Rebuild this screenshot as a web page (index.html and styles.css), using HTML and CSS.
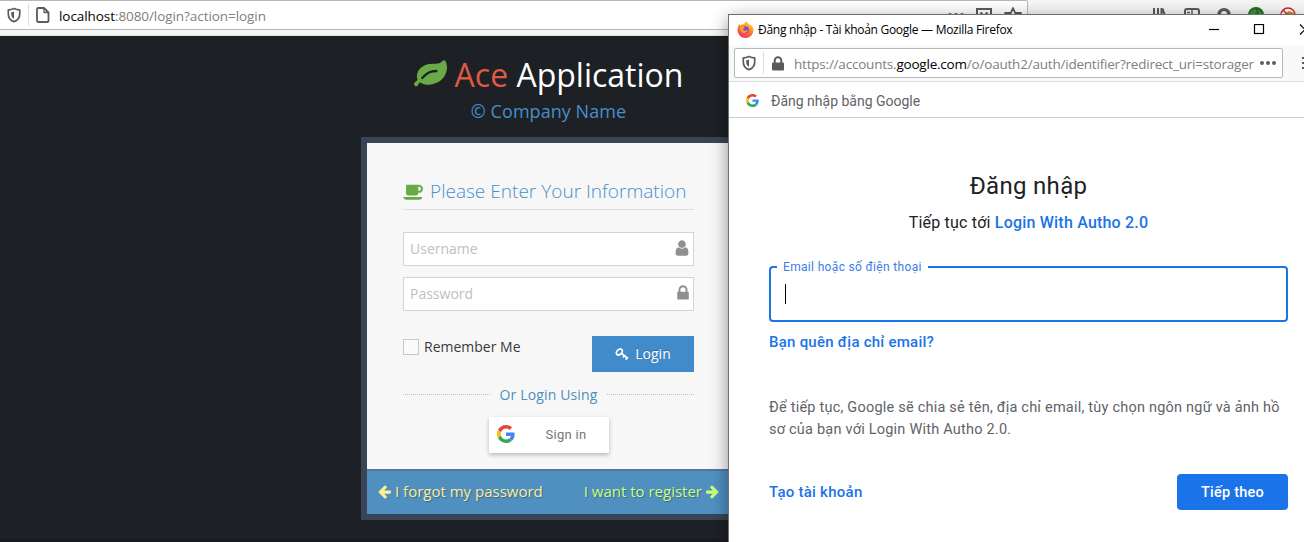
FILE: index.html
```html
<!DOCTYPE html>
<html lang="vi">
<head>
<meta charset="utf-8">
<title>Ace Application</title>
<link rel="stylesheet" href="styles.css">
</head>
<body>
<svg class="defs" width="0" height="0">
  <symbol id="shield" viewBox="0 0 16 16"><path d="M8 1.600C6.300 2.500 4 2.900 2.300 2.900V7c0 3.700 2.200 6.500 5.700 7.600 3.500-1.100 5.700-3.900 5.700-7.600V2.900C12 2.900 9.700 2.500 8 1.600z" fill="none" stroke="#5b5b5b" stroke-width="1.700" stroke-linejoin="round"/><path d="M8 4.600v7.200C6 10.800 5.200 9 5.200 7V5.200C6.200 5.200 7.200 5 8 4.600z" fill="#5b5b5b"/></symbol>
  <symbol id="google" viewBox="0 0 48 48"><path fill="#EA4335" d="M24 9.500c3.540 0 6.710 1.220 9.210 3.600l6.850-6.850C35.900 2.380 30.470 0 24 0 14.620 0 6.510 5.380 2.560 13.220l7.980 6.190C12.430 13.720 17.740 9.500 24 9.500z"/><path fill="#4285F4" d="M46.980 24.550c0-1.570-.15-3.090-.38-4.550H24v9.020h12.940c-.58 2.960-2.260 5.480-4.780 7.180l7.730 6c4.510-4.180 7.090-10.360 7.090-17.650z"/><path fill="#FBBC05" d="M10.530 28.590c-.48-1.450-.76-2.990-.76-4.590s.27-3.140.76-4.590l-7.980-6.190C.92 16.460 0 20.120 0 24c0 3.880.92 7.540 2.560 10.780l7.970-6.190z"/><path fill="#34A853" d="M24 48c6.480 0 11.930-2.130 15.890-5.810l-7.730-6c-2.150 1.450-4.920 2.300-8.160 2.300-6.260 0-11.570-4.220-13.470-9.910l-7.980 6.190C6.510 42.620 14.620 48 24 48z"/></symbol>
  <symbol id="arrow" viewBox="0 0 1792 1792"><path d="M1664 896v128q0 53-32.500 90.500t-84.500 37.500h-704l293 294q38 36 38 90t-38 90l-75 76q-37 37-90 37-52 0-91-37l-651-652q-37-37-37-90 0-52 37-91l651-650q38-38 91-38 52 0 90 38l75 74q38 38 38 91t-38 91l-293 293h704q52 0 84.500 37.500t32.500 90.500z" fill="currentColor"/></symbol>
</svg>
<div class="desktop">
  <header class="toolbar">
    <div class="address">
      <svg class="shield" width="16" height="16"><use href="#shield"/></svg>
      <i class="divider"></i>
      <svg class="doc" width="16" height="16" viewBox="0 0 16 16" fill="none" stroke="#5b5b5b" stroke-width="1.800" stroke-linejoin="round"><path d="M3.300 1h5.700L13.500 5.500v8.200A1.300 1.300 0 0 1 12.200 15H3.300a1.300 1.300 0 0 1-1.300-1.300V2.300A1.300 1.300 0 0 1 3.300 1z"/><path d="M9 1v4.500h4.500" stroke-width="1.300"/></svg>
      <span class="url"><b>localhost</b>:8080/login?action=login</span>
      <span class="actions">
        <svg width="16" height="16" viewBox="0 0 16 16" fill="#5b5b5b"><circle cx="2" cy="8" r="2"/><circle cx="8" cy="8" r="2"/><circle cx="14" cy="8" r="2"/></svg>
        <svg width="16" height="16" viewBox="0 0 16 16" fill="none" stroke="#5b5b5b" stroke-width="2"><path d="M1 2h14v6a7 7 0 0 1-14 0zM4.500 5.500L8 9l3.500-3.500"/></svg>
        <svg width="18" height="16" viewBox="0 0 18 16" fill="none" stroke="#5b5b5b" stroke-width="1.800" stroke-linejoin="round"><path d="M9 1l2.200 5H17l-4.500 3.500 1.700 5.500L9 12l-5.200 3 1.700-5.500L1 6h5.800z"/></svg>
      </span>
    </div>
    <div class="tools">
      <svg width="16" height="16" viewBox="0 0 16 16" stroke="#5b5b5b" stroke-width="2"><path d="M2 1v14M6 1v14M9.500 1v14M10.500 1.500L15 15"/></svg>
      <svg width="16" height="16" viewBox="0 0 16 16" fill="none" stroke="#5b5b5b" stroke-width="2"><rect x="1" y="2" width="14" height="12" rx="2"/><path d="M8 2v12M3 5.500h3M3 8.500h3" stroke-width="1.400"/></svg>
      <svg width="16" height="16" viewBox="0 0 16 16"><circle cx="8" cy="8" r="7" fill="#5b5b5b"/><circle cx="8" cy="7" r="3" fill="#f6f6f6"/></svg>
      <svg width="16" height="16" viewBox="0 0 16 16"><circle cx="8" cy="8" r="8" fill="#236b23"/><path d="M3 4l4-2 2 3-3 3-4-1zM10 2l4 4-3 2z" fill="#3b963b"/></svg>
      <svg width="16" height="16" viewBox="0 0 16 16"><circle cx="8" cy="8" r="7" fill="#fff" stroke="#d32a2a" stroke-width="1.500"/><path d="M5 7l4-3 5 2-3 6z" fill="#d98226"/><path d="M3 3l10 10" stroke="#d32a2a" stroke-width="1.500"/></svg>
    </div>
  </header>

  <main class="page">
    <section class="login">
      <h1 class="brand">
        <svg width="33" height="33" viewBox="0 0 1792 1792"><path fill="#69aa46" d="M1280 704q0-26-19-45t-45-19q-172 0-318 49.500t-259.500 134-235.500 219.500q-19 21-19 45 0 26 19 45t45 19q24 0 45-19 27-24 74-71t67-66q137-124 268.500-176t313.500-52q26 0 45-19t19-45zm512-198q0 95-20 193-46 224-184.500 383t-357.500 268q-214 108-438 108-148 0-286-47-15-5-88-42t-96-37q-16 0-39.500 32t-45 70-52.500 70-60 32q-43 0-63.500-17.500t-45.500-59.500q-2-4-6-11t-5.500-10-3-9.500-1.500-13.500q0-35 31-73.500t68-65.500 68-56 31-48q0-4-14-38t-16-44q-9-51-9-104 0-115 43.500-220t119-184.500 170.500-139 204-95.500q55-18 145-25.500t179.500-9 178.500-6 163.500-24 113.500-56.500l29.500-29.500 29.500-28 27-20 36.500-16 43.500-4.500q39 0 70.500 46t47.500 112 24 124 8 96z"/></svg>
        <span><em>Ace</em> Application</span>
      </h1>
      <p class="company">© Company Name</p>
      <div class="box">
        <form class="form">
          <h2 class="heading">
            <svg width="21" height="19" viewBox="0 0 1920 1792"><path fill="#69aa46" d="M1664 640q0-80-56-136t-136-56h-64v384h64q80 0 136-56t56-136zm-1664 768h1792q0 106-75 181t-181 75h-1280q-106 0-181-75t-75-181zm1856-768q0 159-112.500 271.500t-271.500 112.500h-64v32q0 92-66 158t-158 66h-704q-92 0-158-66t-66-158v-736q0-26 19-45t45-19h1152q159 0 271.500 112.500t112.500 271.500z"/></svg>
            <span>Please Enter Your Information</span>
          </h2>
          <label class="field">
            <span>Username</span>
            <svg width="18" height="18" viewBox="0 0 1792 1792"><path fill="#909090" d="M1536 1399q0 109-62.500 187t-150.500 78h-854q-88 0-150.500-78t-62.500-187q0-85 8.500-160.500t31.500-152 58.500-131 94-89 134.500-34.500q131 128 313 128t313-128q76 0 134.500 34.500t94 89 58.500 131 31.500 152 8.500 160.500zm-256-887q0 159-112.500 271.500t-271.500 112.500-271.500-112.500-112.500-271.500 112.500-271.500 271.500-112.500 271.500 112.500 112.500 271.500z"/></svg>
          </label>
          <label class="field password">
            <span>Password</span>
            <svg width="18" height="18" viewBox="0 0 1792 1792"><path fill="#909090" d="M640 768h512v-192q0-106-75-181t-181-75-181 75-75 181v192zm832 96v576q0 40-28 68t-68 28h-960q-40 0-68-28t-28-68v-576q0-40 28-68t68-28h32v-192q0-184 132-316t316-132 316 132 132 316v192h32q40 0 68 28t28 68z"/></svg>
          </label>
          <div class="submit">
            <span class="remember"><i></i><span>Remember Me</span></span>
            <span class="login-btn">
              <svg width="14" height="14" viewBox="0 0 14 14" fill="none" stroke="#fff" stroke-width="1.700"><ellipse cx="4.300" cy="5" rx="3.400" ry="2.400" transform="rotate(-45 4.300 5)"/><path d="M6 6l7 5.500M9.500 8.600L8 10.500M12.300 10.600L10.700 12.700"/></svg>
              <span>Login</span>
            </span>
          </div>
          <div class="or"><i></i><span>Or Login Using</span><i></i></div>
          <div class="google-btn"><svg width="18" height="18"><use href="#google"/></svg><span>Sign in</span></div>
        </form>
        <footer class="links">
          <a class="forgot"><svg width="15" height="15"><use href="#arrow"/></svg><span>I forgot my password</span></a>
          <a class="register"><span>I want to register</span><svg width="15" height="15"><use href="#arrow"/></svg></a>
        </footer>
      </div>
    </section>
  </main>

  <section class="popup">
    <div class="titlebar">
      <svg width="17" height="17" viewBox="0 0 17 17"><defs><linearGradient id="fire" x1=".8" y1="0" x2=".3" y2="1"><stop offset="0" stop-color="#ffe23d"/><stop offset=".45" stop-color="#ff8b22"/><stop offset="1" stop-color="#f52b64"/></linearGradient></defs><path d="M9.500.5c1 1 2 1.400 2.500 3 2-.1 4.500 2.500 4.500 5.500a8 8 0 0 1-16 0c0-2.500.8-4.500 2-6l.8 1.500C4.500 3.700 5.500 3.200 7 3.300 7.300 2 8.200 1 9.500.5z" fill="url(#fire)"/><circle cx="8.300" cy="8.800" r="3.600" fill="#8048d8"/><path d="M3.300 5.500c2-.6 3.500 0 4.700 1.300L6 8c.5 2 3.500 2.200 5 .5-.3 3.500-3.500 4.300-5.700 3C3 10 2.600 7.500 3.300 5.500z" fill="#ff9a26"/></svg>
      <span class="wintitle">Đăng nhập - Tài khoản Google — Mozilla Firefox</span>
      <svg class="controls" width="95" height="12" viewBox="0 0 95 12" fill="none" stroke="#000" stroke-width="1.200"><path d="M0 5.500h10"/><rect x="45.500" y=".5" width="9" height="9"/><path d="M91 .5l10 10M91 10.500l10-10"/></svg>
    </div>
    <div class="navbar">
      <div class="location">
        <svg class="shield" width="16" height="16"><use href="#shield"/></svg>
        <i class="divider"></i>
        <svg class="lock" width="14" height="15" viewBox="0 0 14 15"><rect x="1" y="6.500" width="12" height="8" rx="1" fill="#5b5b5b"/><path d="M3.700 7V4.500a3.300 3.300 0 0 1 6.600 0V7" fill="none" stroke="#5b5b5b" stroke-width="2"/></svg>
        <span class="url">https://accounts.<b>google.com</b>/o/oauth2/auth/identifier?redirect_uri=storager</span>
        <svg class="dots" width="16" height="6" viewBox="0 0 16 6" fill="#5b5b5b"><circle cx="2" cy="3" r="2"/><circle cx="8" cy="3" r="2"/><circle cx="14" cy="3" r="2"/></svg>
      </div>
      <svg width="2" height="14" viewBox="0 0 2 14" fill="#5b5b5b"><path d="M0 1h2v2H0zM0 6h2v2H0zM0 11h2v2H0z"/></svg>
    </div>
    <div class="provider"><svg width="13" height="13"><use href="#google"/></svg><span>Đăng nhập bằng Google</span></div>
    <div class="signin">
      <h2>Đăng nhập</h2>
      <p class="continue"><span>Tiếp tục tới</span> <b>Login With Autho 2.0</b></p>
      <div class="email"><label>Email hoặc số điện thoại</label><i class="caret"></i></div>
      <a class="forgot-email">Bạn quên địa chỉ email?</a>
      <p class="notice"><span>Để tiếp tục, Google sẽ chia sẻ tên, địa chỉ email, tùy chọn ngôn ngữ và ảnh hồ</span><br><span>sơ của bạn với Login With Autho 2.0.</span></p>
      <div class="next"><a>Tạo tài khoản</a><span class="next-btn">Tiếp theo</span></div>
    </div>
  </section>
</div>
</body>
</html>
```

FILE: styles.css
```css
* { box-sizing: border-box; }
body { margin: 0; font-family: "Open Sans", "Noto Sans", sans-serif; overflow: hidden; }
h1, h2, p { margin: 0; font-weight: 400; }
svg { display: block; flex: none; }
span, a { white-space: nowrap; }
.defs { position: absolute; }
.desktop { position: relative; width: 1304px; height: 542px; overflow: hidden; background: #1d2024; }

.toolbar { display: flex; height: 36px; background: #f6f6f6; border-bottom: 1px solid #e4e4e4; }
.address { display: flex; align-items: center; width: 1028px; height: 30px; padding-left: 6px; background: #fff; border: 1px solid #b8b8b8; border-left: 0; border-radius: 0 2px 2px 0; }
.divider { width: 1px; height: 22px; background: #ddd; margin: 0 6px; }
.url { font: 13.500px/18px "Open Sans", sans-serif; color: #808080; }
.url b { font-weight: 400; color: #000; }
.address .url { margin-left: 8px; letter-spacing: -.07px; padding-top: 2px; }
.actions { display: flex; gap: 12px; margin-left: auto; padding-right: 5px; }
.tools { display: flex; gap: 16px; margin-left: 124px; padding-top: 7px; }

.page { height: 506px; padding-top: 19px; border-bottom: 3px solid #191b1f; }
.login { width: 375px; margin-left: 361px; }
.brand { display: flex; align-items: center; justify-content: center; gap: 8px; height: 40px; color: #fff; font-size: 32px; line-height: 40px; }
.brand em { font-style: normal; color: #dd5a43; }
.brand svg { margin-bottom: 2px; }
.company { height: 42px; color: #478fca; font-size: 18px; line-height: 33px; text-align: center; letter-spacing: .05px; }
.box { height: 383px; border: 6px solid #394557; background: #f7f7f7; }
.form { height: 326px; padding: 33px 36px 0; }
.heading { display: flex; align-items: center; gap: 6px; height: 34px; margin-bottom: 22px; padding-bottom: 3px; border-bottom: 1px solid #d5e3ef; color: #478fca; font-size: 19px; font-weight: 300; letter-spacing: .02px; }
.heading svg { margin-bottom: -1px; }
.field { display: flex; align-items: center; justify-content: space-between; height: 34px; margin-bottom: 11px; padding: 0 2px 1px 6px; border: 1px solid #d5d5d5; background: #fff; color: #c0c0c0; font-size: 14px; }
.field svg { margin-bottom: 1px; }
.field.password { padding-right: 1px; }
.submit { display: flex; justify-content: space-between; height: 36px; margin-top: 25px; }
.remember { display: flex; align-items: center; gap: 5px; height: 22px; color: #393939; font-size: 14px; }
.remember span { padding-bottom: 2px; }
.remember i { width: 16px; height: 16px; border: 1px solid #c8c8c8; background: #fafafa; }
.login-btn { display: flex; align-items: center; justify-content: center; gap: 6px; width: 102px; background: #428bca; color: #fff; font-size: 14px; text-shadow: 0 -1px 0 rgba(0,0,0,.25); }
.login-btn span { padding-bottom: 2px; }
.or { display: flex; align-items: center; gap: 9px; height: 20px; margin-top: 12px; color: #4c8fbd; font-size: 14px; letter-spacing: .15px; }
.or span { padding-top: 1px; }
.or i { flex: 1; border-top: 1px dotted #a6c4db; }
.google-btn { display: flex; align-items: center; width: 120px; height: 36px; margin: 13px auto 0; padding: 0 0 2px 8px; background: #fff; border-radius: 1px; box-shadow: 0 2px 4px rgba(0,0,0,.25); color: #757575; font: 13px Roboto, sans-serif; }
.google-btn span { margin-left: 31px; letter-spacing: .3px; }
.links { display: flex; justify-content: space-between; align-items: center; height: 45px; padding: 0 10px 3px 10px; border-top: 2px solid #597597; background: #5090c1; font-size: 15px; text-shadow: 1px 1px 1px rgba(0,0,0,.3); }
.links a { display: flex; align-items: center; gap: 3px; }
.links .forgot { color: #fe9; }
.links .register { color: #cf7; }
.register svg { transform: scaleX(-1); }

.popup { position: absolute; left: 728px; top: 14px; width: 576px; height: 528px; background: #fff; border: solid #707070; border-width: 1px 0 0 1px; box-shadow: 0 4px 16px rgba(0,0,0,.42); }
.titlebar { display: flex; align-items: center; height: 30px; padding-left: 8px; }
.titlebar svg { margin-bottom: 1px; }
.wintitle { margin: 0 0 1px 4px; font: 12px "Open Sans", sans-serif; color: #000; letter-spacing: -.28px; }
.titlebar .controls { margin-left: auto; margin-bottom: 0; }
.navbar { display: flex; align-items: center; height: 37px; padding: 0 0 0 5px; background: #f9f9f9; border-bottom: 1px solid #ddd; justify-content: space-between; }
.location { display: flex; align-items: center; width: 549px; height: 30px; padding-left: 6px; border: 1px solid #b8b8b8; border-radius: 2px; background: #fff; }
.location .lock { margin-left: 1px; }
.location .url { margin-left: 9px; letter-spacing: -.21px; padding-top: 2px; width: 460px; overflow: hidden; }
.dots { margin-left: 6px; }
.provider { display: flex; align-items: center; gap: 12px; height: 36px; padding: 2px 0 0 17px; border-bottom: 1px solid #ccc; color: #5f6368; font: 14px Roboto, sans-serif; }
.signin { padding: 50px 16px 0 40px; font-family: Roboto, sans-serif; }
.signin h2 { height: 36px; text-align: center; color: #202124; font-size: 24px; line-height: 36px; letter-spacing: .3px; }
.continue { height: 24px; margin-top: 7px; text-align: center; color: #202124; font-size: 16px; line-height: 24px; letter-spacing: .2px; }
.continue b, .forgot-email, .next a { color: #1a73e8; font-weight: 500; }
.email { position: relative; height: 56px; margin-top: 31px; border: 2px solid #1a73e8; border-radius: 4px; padding: 16px 14px; }
.email label { position: absolute; left: 6px; top: -9px; padding: 0 6px; background: #fff; color: #3b7de9; font-size: 12px; line-height: 16px; letter-spacing: .33px; }
.caret { display: block; width: 1px; height: 20px; background: #000; }
.forgot-email { display: block; margin-top: 10px; font-size: 15px; line-height: 20px; letter-spacing: .25px; }
.notice { margin-top: 45px; color: #5f6368; font-size: 14.500px; line-height: 22px; letter-spacing: .22px; }
.next { display: flex; align-items: center; justify-content: space-between; height: 36px; margin-top: 33px; font-size: 15px; letter-spacing: .25px; }
.next-btn { width: 111px; height: 36px; border-radius: 4px; background: #1a73e8; color: #fff; font-size: 14.500px; font-weight: 500; line-height: 37px; text-align: center; }
```
